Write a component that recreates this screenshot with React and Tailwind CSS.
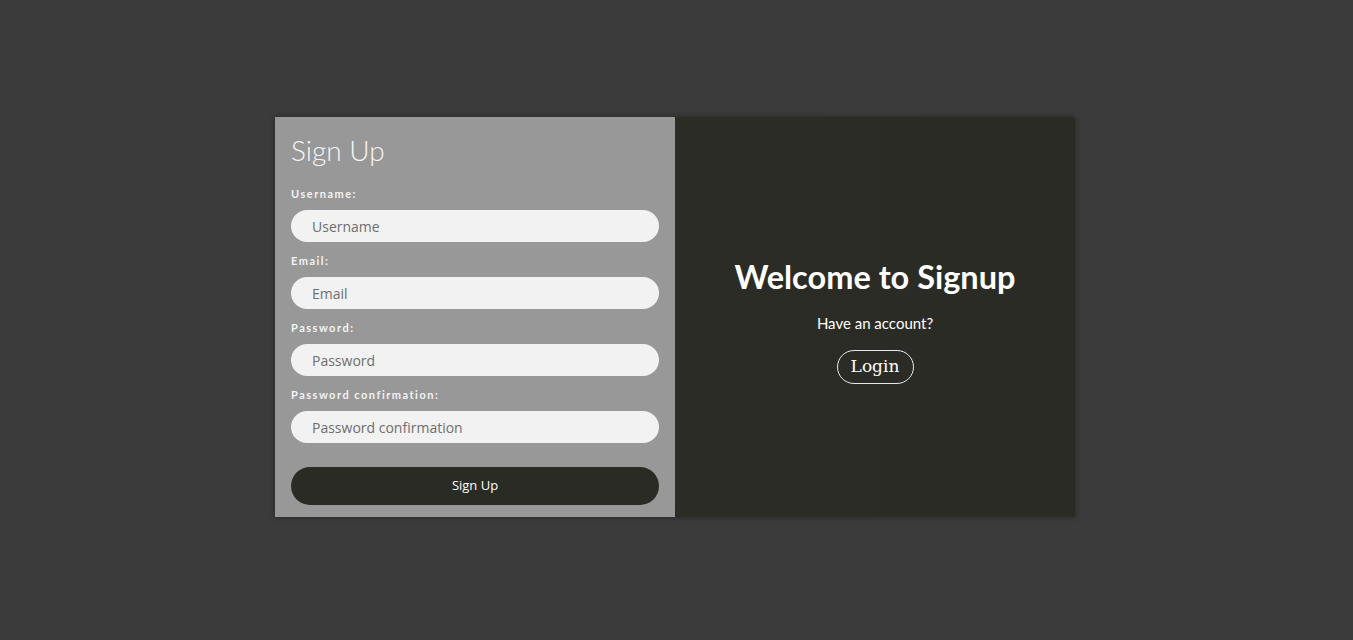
export default function App() {
  const fields = [
    { label: "Username:", placeholder: "Username", type: "text" },
    { label: "Email:", placeholder: "Email", type: "email" },
    { label: "Password:", placeholder: "Password", type: "password" },
    { label: "Password confirmation:", placeholder: "Password confirmation", type: "password" },
  ];

  return (
    <div className="min-h-screen bg-[#3b3b3b] flex items-center justify-center pb-[6px] pr-[3px] font-['Lato',sans-serif]">
      <div className="flex w-[800px] h-[400px] shadow-[0_0_6px_rgba(0,0,0,0.35)]">
        {/* form */}
        <div className="w-[400px] bg-[#989898] px-4 pt-[17px]">
          <h1 className="text-[28px] font-light text-[#f5f5f5] leading-[32px] mb-[21px]">Sign Up</h1>
          {fields.map((f) => (
            <div key={f.label} className="mb-[12px]">
              <label className="block text-[11px] font-bold tracking-[1.5px] text-[#f3f3f3] leading-[14px] mb-[9px]">
                {f.label}
              </label>
              <input
                type={f.type}
                placeholder={f.placeholder}
                className="w-full h-8 rounded-full bg-[#f2f2f2] pl-[21px] text-[14px] font-['Open_Sans',sans-serif] text-[#555] placeholder:text-[#6e6e6e] outline-none"
              />
            </div>
          ))}
          <button className="mt-[12px] w-full h-[38px] rounded-full bg-[#2b2b26] text-white text-[13px] font-['Open_Sans',sans-serif]">
            Sign Up
          </button>
        </div>

        {/* welcome */}
        <div className="w-[400px] bg-gradient-to-r from-[#2c2c27] to-[#2b2b26] flex flex-col items-center justify-center pt-[6px]">
          <h2 className="text-[32.5px] font-bold text-white leading-[40px]">Welcome to Signup</h2>
          <p className="mt-[17px] text-[15px] text-white leading-[18px]">Have an account?</p>
          <button className="mt-[18px] h-[34px] w-[77px] rounded-full border border-[#e8e8e8] text-white text-[17px] font-['DejaVu_Serif',serif]">
            Login
          </button>
        </div>
      </div>
    </div>
  );
}
